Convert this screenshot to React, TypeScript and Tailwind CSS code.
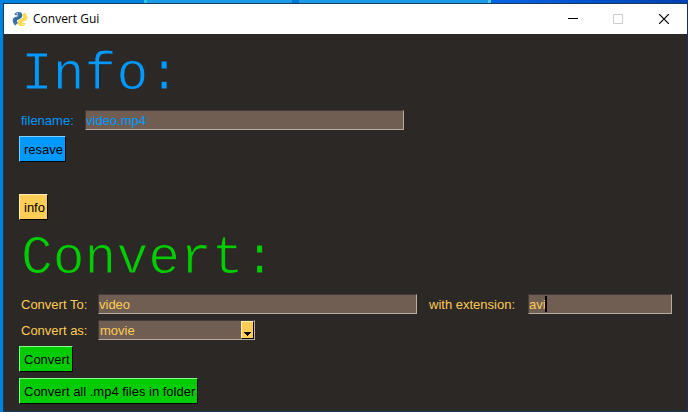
import type { ReactNode } from "react";

const field =
  "h-5 border border-t-[#463c37] border-l-[#463c37] border-r-[#b8aca5] border-b-[#b8aca5] bg-[#705e52] pt-[2px] outline-none";

function Heading({ className, children }: { className: string; children: ReactNode }) {
  return (
    <h1
      className={`h-15 pl-[2px] font-['Liberation_Mono',monospace] text-[53px] leading-[62px] [-webkit-text-stroke:1px_#2c2825] ${className}`}
    >
      {children}
    </h1>
  );
}

function Button({ className, children }: { className: string; children: ReactNode }) {
  return (
    <button
      type="button"
      className={`flex h-[26px] items-center self-start whitespace-nowrap border border-r-black border-b-black pt-[2px] pr-[2px] pl-1 leading-5 text-black ${className}`}
    >
      {children}
    </button>
  );
}

function PythonIcon() {
  return (
    <svg viewBox="0 0 16 16" className="size-4" aria-hidden="true">
      <g fill="none" strokeWidth="4" strokeLinejoin="round">
        <path d="M4.500 4.200C4.600 2.600 8.300 2.300 8.300 4.200C8.300 7 2.600 6.600 2.600 9.300C2.600 11.300 3.600 12 4.600 13.200" stroke="#3f78ab" />
        <path d="M11.500 11.800C11.400 13.400 7.700 13.700 7.700 11.800C7.700 9 13.400 9.400 13.400 6.700C13.400 4.700 12.400 4 11.400 2.800" stroke="#ffda4e" />
      </g>
      <path d="M8.800 1L10 3.500C10 6.500 9 7 6.800 7.800C5 8.400 4.800 9.200 4.600 11L2 11L3 7L6 6L8 4Z" fill="#34699c" />
      <circle cx="5.200" cy="2.700" r=".7" fill="white" />
      <circle cx="10.800" cy="13.300" r=".7" fill="white" />
      <path d="M0 5.600h5.500M10.500 10.400H16" stroke="white" strokeWidth=".7" />
    </svg>
  );
}

function TitleBar() {
  return (
    <header className="flex h-[30px] items-center bg-white pl-2 text-black">
      <PythonIcon />
      <span className="ml-[5px] flex-1 font-['Open_Sans',sans-serif] text-[12px] leading-4">Convert Gui</span>
      <button type="button" aria-label="Minimize" className="flex h-full w-[45px] items-center justify-center">
        <svg width="10" height="10" shapeRendering="crispEdges"><path d="M0 4.500h10" stroke="black" /></svg>
      </button>
      <button type="button" aria-label="Maximize" disabled className="flex h-full w-[46px] items-center justify-center">
        <svg width="10" height="10"><path d="M.5.5h9v9h-9Z" fill="none" stroke="#cccccc" /></svg>
      </button>
      <button type="button" aria-label="Close" className="flex h-full w-[46px] items-center justify-center">
        <svg width="10" height="10"><path d="M0 0l10 10M10 0L0 10" stroke="black" strokeWidth="1.200" /></svg>
      </button>
    </header>
  );
}

export default function App() {
  return (
    <div className="flex min-h-screen flex-col bg-[#0083dc] pl-[3px] font-['Liberation_Sans',Arial,sans-serif] text-[13px] leading-[22px]">
      <div className="flex h-[3px]">
        <div className="w-[141px] bg-[#0083e0]" />
        <div className="w-[3px] bg-[#20c8e0]" />
        <div className="flex-[145] bg-[#1b9be6]" />
        <div className="w-[7px] bg-[#0078d8]" />
        <div className="flex-[190] bg-[#1b9be6]" />
        <div className="w-[3px] bg-[#50c8e0]" />
        <div className="flex-[197] bg-linear-to-r from-[#0064e4] to-[#0040b0]" />
      </div>
      <div className="flex flex-1 flex-col border border-[#183a5c] border-r-[#202c58] bg-[#2c2825]">
        <TitleBar />
        <main className="flex flex-col pt-[10px] pr-[15px] pl-[15px]">
          <Heading className="text-[#0099ff]">Info:</Heading>
          <div className="mt-[6px] flex h-5 text-[#0099ff]">
            <label htmlFor="filename" className="w-[66px] pl-[2px]">filename:</label>
            <input id="filename" defaultValue="video.mp4" className={`${field} w-[319px]`} />
          </div>
          <Button className="mt-[6px] border-t-[#80d0ff] border-l-[#80d0ff] bg-[#0099ff]">resave</Button>
          <Button className="mt-8 border-t-[#fff0b0] border-l-[#fff0b0] bg-[#ffcc55]">info</Button>
          <Heading className="mt-2 text-[#00cc00]">Convert:</Heading>
          <div className="mt-[6px] flex h-5 text-[#ffcc55]">
            <label htmlFor="target" className="w-[79px] pl-[2px]">Convert To:</label>
            <input id="target" defaultValue="video" className={`${field} w-[319px]`} />
            <label htmlFor="extension" className="w-[111px] pl-3 whitespace-nowrap">with extension:</label>
            <div className="relative flex min-w-0 flex-1">
              <input id="extension" defaultValue="avi" className={`${field} w-full`} />
              <span className="absolute top-[2px] left-[17px] h-4 w-[2px] bg-black" />
            </div>
          </div>
          <div className="mt-[6px] flex h-5 text-[#ffcc55]">
            <label htmlFor="kind" className="w-[79px] pl-[2px]">Convert as:</label>
            <div className="relative flex w-[157px]">
              <select id="kind" className={`${field} w-full appearance-none pl-px leading-4`}>
                <option>movie</option>
              </select>
              <span className="pointer-events-none absolute top-px right-px flex h-[18px] w-[13px] items-end justify-center border border-t-[#fff0b0] border-l-[#fff0b0] border-r-black border-b-black bg-[#ffcc55] pb-[2px]">
                <svg width="7" height="4" shapeRendering="crispEdges"><path d="M0 0h7v1H6v1H5v1H4v1H3V3H2V2H1V1H0Z" fill="black" /></svg>
              </span>
            </div>
          </div>
          <Button className="mt-[6px] border-t-[#80ff80] border-l-[#80ff80] bg-[#00cc00]">Convert</Button>
          <Button className="mt-[6px] border-t-[#80ff80] border-l-[#80ff80] bg-[#00cc00]">
            Convert all .mp4 files in folder
          </Button>
        </main>
      </div>
    </div>
  );
}
